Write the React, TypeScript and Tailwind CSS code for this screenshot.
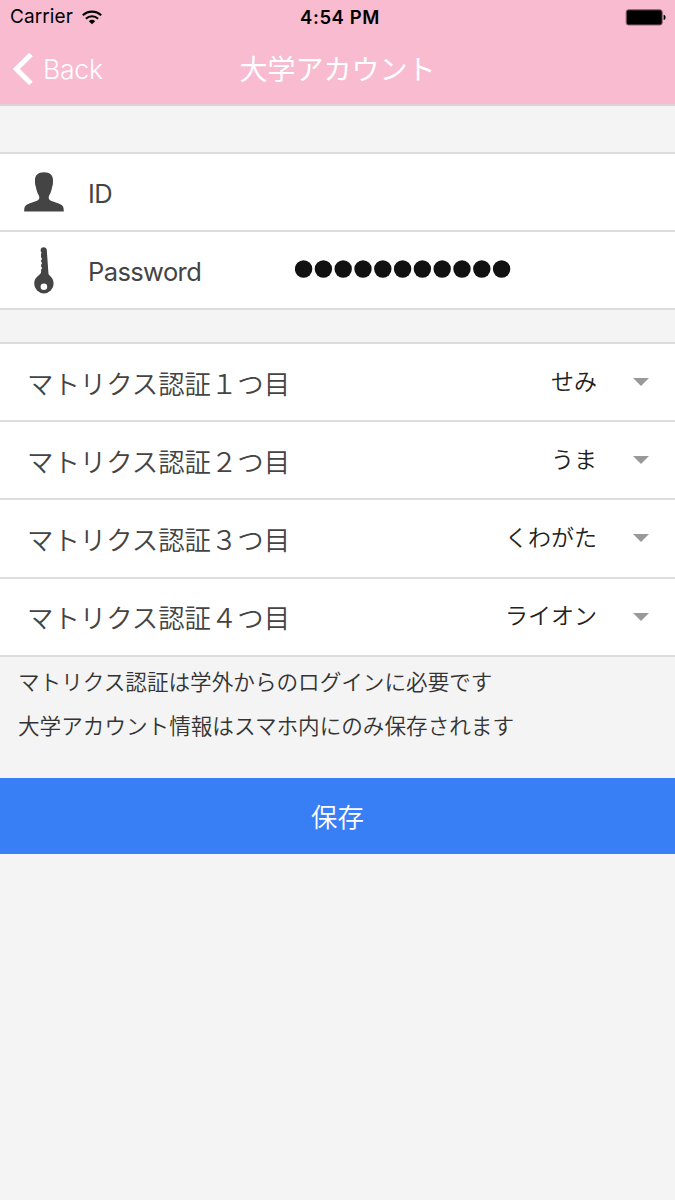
import type { ReactNode } from "react";

const selects = [
  { label: "マトリクス認証１つ目", value: "せみ" },
  { label: "マトリクス認証２つ目", value: "うま" },
  { label: "マトリクス認証３つ目", value: "くわがた" },
  { label: "マトリクス認証４つ目", value: "ライオン" },
];

const PASSWORD_LENGTH = 11;

function WifiIcon() {
  return (
    <svg className="shrink-0" width="20" height="15" viewBox="0 0 20 15" fill="none" stroke="#000" strokeWidth="2.2">
      <path d="M0.8 5.3a13.2 13.2 0 0 1 18.4 0" />
      <path d="M3.9 8.7a8.8 8.8 0 0 1 12.2 0" />
      <path d="M10 14.3L6.8 11.3a4.7 4.7 0 0 1 6.4 0z" fill="#000" stroke="none" />
    </svg>
  );
}

function BatteryIcon() {
  return (
    <svg className="shrink-0" width="41" height="17" viewBox="0 0 41 17">
      <rect x="1.2" y="0.8" width="36" height="15.2" rx="2.2" fill="#000" stroke="#8a606e" strokeWidth="1" />
      <path d="M38.6 5.8c1.3 0.3 2 1.4 2 2.6s-0.7 2.3-2 2.6z" fill="#000" />
    </svg>
  );
}

function PersonIcon() {
  return (
    <svg width="40" height="40" viewBox="0 0 40 40" fill="#444">
      <path d="M20 0.2C14 0.2 10.900 3.400 11 8.200c0 1.200 0 2.300 0.100 3.800 0.100 1.200 0.500 1.600 0.700 2.800 0.500 3.200 1.500 6.200 3 8.600 0.400 0.700 0.500 1.500 0.500 2.300 0 1.500-0.700 2.400-2.800 3.200-3.200 1.200-6.700 2-9.300 3.500C0.900 33.700 0.200 35 0.200 39.400h39.600c0-4.400-0.700-5.700-3-7-2.600-1.500-6.100-2.300-9.300-3.500-2.100-0.800-2.800-1.700-2.800-3.200 0-0.800 0.100-1.600 0.500-2.300 1.500-2.400 2.500-5.400 3-8.600 0.200-1.200 0.600-1.600 0.700-2.800 0.100-1.500 0.100-2.600 0.100-3.800C29.100 3.400 26 0.200 20 0.200z" />
    </svg>
  );
}

function KeyIcon() {
  return (
    <svg width="20" height="47" viewBox="0 0 20 47" fill="#444">
      <path
        fillRule="evenodd"
        d="M9.700 0.200C7.900 0.200 6.700 1.200 6.700 2.800v1.800q1.500 0.900 0.300 2.200v3.600q1.800 1.100 0.100 2.600v2q1.800 1.100 0 2.500v2.300q1.900 1.200 0 2.600v2.200c0 1.600-0.700 2.500-2.300 3.700C1.900 30.300 0.200 33 0.200 36.700a9.700 9.700 0 0 0 19.400 0c0-3.700-1.700-6.400-4.200-8.400-0.600-0.600-0.900-1.200-1-2.300L12.800 3c-0.100-1.700-1.300-2.800-3.100-2.800zM9.900 36.400a3.300 3.300 0 1 1 0 6.600 3.300 3.300 0 0 1 0-6.600z"
      />
    </svg>
  );
}

function PasswordDots() {
  return (
    <svg className="-mt-[2px]" width="216" height="18" viewBox="0 0 216 18" fill="#111">
      {Array.from({ length: PASSWORD_LENGTH }, (_, i) => (
        <circle key={i} cx={8.6 + i * 19.8} cy="9" r="8.7" />
      ))}
    </svg>
  );
}

function FieldRow({ icon, label, children }: { icon: ReactNode; label: string; children?: ReactNode }) {
  return (
    <div className="flex h-[78px] items-center border-t-2 border-[#ddd]">
      <div className="flex w-[88px] shrink-0 justify-center">{icon}</div>
      <span className="w-[207px] pt-[4px] text-[25.500px] font-normal tracking-[-0.600px]">{label}</span>
      {children}
    </div>
  );
}

function SelectRow({ label, value }: { label: string; value: string }) {
  return (
    <div className="flex h-[78.200px] items-center border-t-2 border-[#ddd] pr-[26px] pl-[27px]">
      <span className="flex-1 pt-[5px] text-[26.400px]">{label}</span>
      <span className="text-[23px] text-[#222]">{value}</span>
      <svg className="ml-[36px]" width="16" height="8" viewBox="0 0 16 8" fill="#999">
        <path d="M0 0h16L8 8z" />
      </svg>
    </div>
  );
}

export default function App() {
  return (
    <div className="h-[1200px] w-[675px] overflow-hidden bg-[#f4f4f4] font-['Inter','Noto_Sans_CJK_JP',sans-serif] font-[350] text-[#444]">
      <header className="flex h-[106px] flex-col border-b-2 border-[#dfd3d8] bg-[#f8bbd0]">
        <div className="grid h-[34px] grid-cols-3 items-center pr-[9px] pl-[10px] text-black">
          <div className="flex items-center gap-[9px] text-[19px] font-normal">
            <span className="pt-px tracking-[0.100px]">Carrier</span>
            <WifiIcon />
          </div>
          <span className="pt-px pl-1 text-center text-[18.500px] font-semibold tracking-[0.600px]">4:54 PM</span>
          <div className="flex justify-end">
            <BatteryIcon />
          </div>
        </div>
        <div className="grid flex-1 grid-cols-3 items-center pt-[2px] pl-[13px] text-white">
          <button type="button" className="flex items-center gap-[10px] text-[26.500px] tracking-[-0.200px]">
            <svg className="-mt-[2px]" width="20" height="32" viewBox="0 0 20 32" fill="none" stroke="currentColor" strokeWidth="5">
              <path d="M18 1.500L3.400 16l14.600 14.500" />
            </svg>
            Back
          </button>
          <h1 className="-ml-[13px] text-center text-[28px] font-normal whitespace-nowrap">大学アカウント</h1>
        </div>
      </header>

      <section className="mt-[46px] border-b-2 border-[#ddd] bg-white">
        <FieldRow icon={<PersonIcon />} label="ID" />
        <FieldRow icon={<KeyIcon />} label="Password">
          <PasswordDots />
        </FieldRow>
      </section>

      <section className="mt-[32px] border-b-2 border-[#ddd] bg-white">
        {selects.map((s) => (
          <SelectRow key={s.label} {...s} />
        ))}
      </section>

      <div className="px-[18px] pt-[3px] text-[21.600px] leading-[44px] text-[#333]">
        <p>マトリクス認証は学外からのログインに必要です</p>
        <p>大学アカウント情報はスマホ内にのみ保存されます</p>
      </div>

      <button type="button" className="mt-[30px] flex h-[76px] w-full items-center justify-center bg-[#387ef5] pt-[4px] text-[26.400px] text-white">
        保存
      </button>
    </div>
  );
}
